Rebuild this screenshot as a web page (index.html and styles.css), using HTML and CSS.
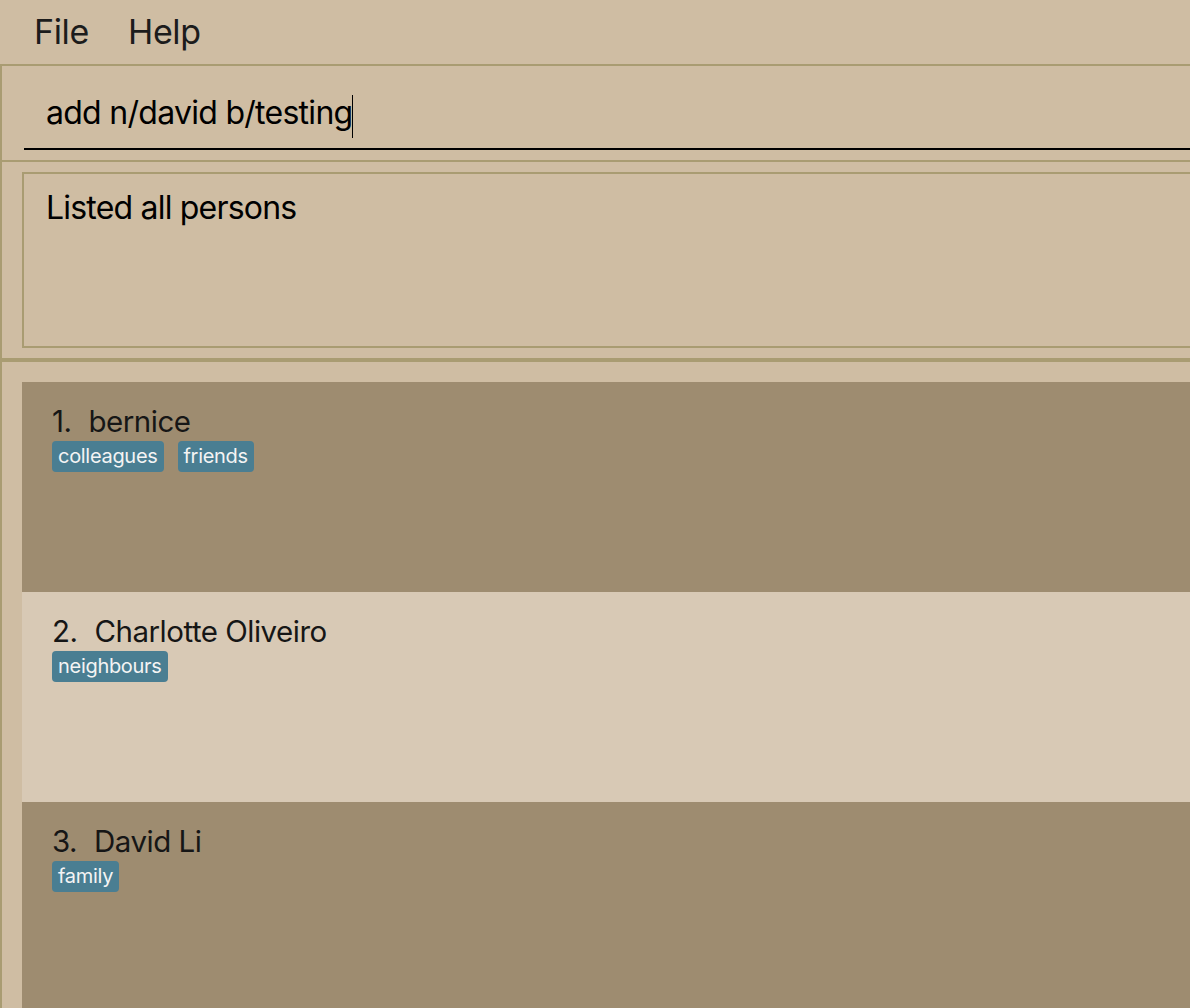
FILE: index.html
```html
<!DOCTYPE html>
<html>
<head>
<meta charset="utf-8">
<title>Address Book</title>
<link rel="stylesheet" href="styles.css">
</head>
<body>
<div class="app">
  <nav class="menubar">
    <span class="menu-item">File</span>
    <span class="menu-item">Help</span>
  </nav>

  <section class="command-pane">
    <div class="command-field">
      <span class="command-text">add n/david b/testing</span><span class="caret"></span>
    </div>
  </section>

  <section class="result-pane">
    <div class="result-box">Listed all persons</div>
  </section>

  <section class="list-pane">
    <div class="card card-dark">
      <div class="card-title"><span class="card-id">1.</span><span class="card-name">bernice</span></div>
      <div class="tags"><span class="tag">colleagues</span><span class="tag">friends</span></div>
    </div>
    <div class="card card-light">
      <div class="card-title"><span class="card-id">2.</span><span class="card-name">Charlotte Oliveiro</span></div>
      <div class="tags"><span class="tag">neighbours</span></div>
    </div>
    <div class="card card-dark">
      <div class="card-title"><span class="card-id">3.</span><span class="card-name">David Li</span></div>
      <div class="tags"><span class="tag">family</span></div>
    </div>
  </section>
</div>
</body>
</html>
```
FILE: styles.css
```css
html, body {
  margin: 0;
  padding: 0;
  background: #cfbda3;
  overflow: hidden;
  height: 100%;
}

body {
  font-family: "Inter", "Noto Sans", sans-serif;
  color: #141414;
}

.app {
  width: 1240px;
}

/* Menu bar */
.menubar {
  height: 64px;
  display: flex;
  align-items: flex-start;
  gap: 39px;
  padding-left: 34px;
  font-size: 34px;
  letter-spacing: -0.35px;
  line-height: 64px;
  color: #1c1c1c;
}

/* Command box */
.command-pane {
  border-top: 2px solid #a99c72;
  border-bottom: 2px solid #a99c72;
  border-left: 2px solid #a99c72;
  padding: 6px 0 10px 22px;
}

.command-field {
  padding: 20.5px 0 14.75px 22px;
  border-bottom: 2px solid #000;
  font-size: 32px;
  letter-spacing: -0.72px;
  line-height: normal;
  color: #000;
  white-space: nowrap;
}

.caret {
  display: inline-block;
  width: 1px;
  height: 43px;
  margin: -5px 0 -5px 0;
  background: #000;
  vertical-align: -9.5px;
}

/* Result display */
.result-pane {
  border-bottom: 2px solid #a99c72;
  border-left: 2px solid #a99c72;
  padding: 10px 0 10px 20px;
}

.result-box {
  height: 158px;
  border: 2px solid #a99c72;
  padding: 14px 0 0 22px;
  font-size: 32px;
  letter-spacing: -0.8px;
  line-height: normal;
  color: #000;
}

/* Person list */
.list-pane {
  border-top: 2px solid #a99c72;
  border-left: 2px solid #a99c72;
  padding: 20px 0 0 20px;
}

.card {
  height: 210px;
  box-sizing: border-box;
  padding: 21px 0 0 30px;
}

.card-dark {
  background: #9e8c70;
}

.card-light {
  background: #d8c9b5;
}

.card-title {
  display: flex;
  gap: 17px;
  font-size: 29.5px;
  line-height: 36px;
  letter-spacing: -0.5px;
  color: #161616;
}

.tags {
  display: flex;
  gap: 14px;
  margin-top: 2.5px;
}

.tag {
  background: #4a7e92;
  color: #f4f4f4;
  font-size: 20px;
  letter-spacing: -0.3px;
  line-height: 24px;
  padding: 3px 6px 4px 6px;
  border-radius: 4px;
}
```
